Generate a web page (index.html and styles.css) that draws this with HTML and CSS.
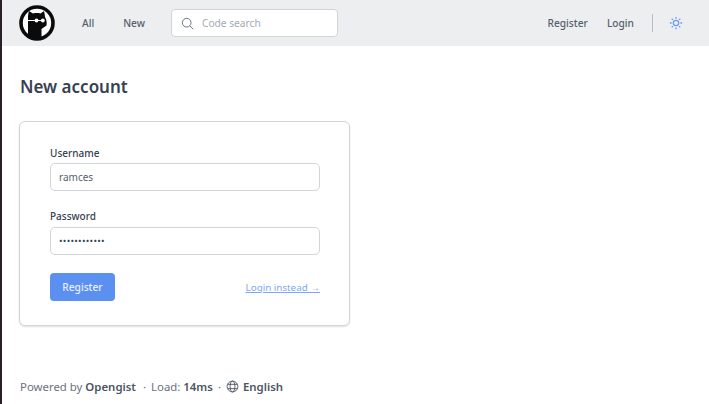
FILE: index.html
```html
<!DOCTYPE html>
<html lang="en">
<head>
<meta charset="utf-8">
<title>New account</title>
<link rel="stylesheet" href="styles.css">
</head>
<body>
<div class="page">
  <header class="nav">
    <svg class="logo" viewBox="0 0 36 36" aria-hidden="true">
      <circle cx="18" cy="18" r="16" fill="#fff" stroke="#0b0b0b" stroke-width="3.6"/>
      <path d="M9 33V13C9 10 9.500 7.500 10 6l4 2.500c2.500-.6 5-.6 7.500 0L25 6c.6 2 .8 4 1 6 1.500 2.500 2 5.500 1.500 8.500L22.500 24v9z" fill="#0b0b0b"/>
      <path d="M4 15.500h20" stroke="#fff" stroke-width="1"/>
      <circle cx="17.500" cy="15.500" r="1.900" fill="#fff"/>
      <circle cx="23.800" cy="15.500" r="1.900" fill="#fff"/>
    </svg>
    <nav class="nav-links">
      <a class="nav-link" href="#">All</a>
      <a class="nav-link" href="#">New</a>
    </nav>
    <div class="search">
      <svg class="search-icon" viewBox="0 0 24 24" aria-hidden="true"><circle cx="10.500" cy="10.500" r="8"/><path d="M16.500 16.500l6 6"/></svg>
      <span class="search-text">Code search</span>
    </div>
    <div class="nav-right">
      <a class="nav-link" href="#">Register</a>
      <a class="nav-link" href="#">Login</a>
      <span class="divider"></span>
      <svg class="sun" viewBox="0 0 24 24" aria-hidden="true"><circle cx="12" cy="12" r="4.600"/><path d="M12 1.500v3M12 19.500v3M1.500 12h3M19.500 12h3M4.600 4.600l2.100 2.100M17.300 17.300l2.100 2.100M4.600 19.400l2.100-2.100M17.300 6.700l2.100-2.100"/></svg>
    </div>
  </header>
  <main class="main">
    <h1 class="title">New account</h1>
    <form class="card">
      <label class="label">Username</label>
      <div class="input">ramces</div>
      <label class="label label-second">Password</label>
      <div class="input input-pass">••••••••••••</div>
      <div class="actions">
        <span class="button">Register</span>
        <a class="login-link" href="#">Login instead →</a>
      </div>
    </form>
  </main>
  <footer class="footer">
    <span>Powered by <b>Opengist</b></span>
    <span class="dot">·</span>
    <span>Load: <b>14ms</b></span>
    <span class="dot dot-last">·</span>
    <svg class="globe" viewBox="0 0 24 24" aria-hidden="true"><circle cx="12" cy="12" r="10"/><ellipse cx="12" cy="12" rx="4.500" ry="10"/><path d="M3 8h18M3 16h18"/></svg>
    <b>English</b>
  </footer>
</div>
</body>
</html>
```

FILE: styles.css
```css
* { box-sizing: border-box; }
html, body { margin: 0; height: 100%; }
body {
  background: #fff;
  font-family: "Noto Sans", "Open Sans", sans-serif;
  color: #374151;
  overflow: hidden;
}
.page {
  height: 404px;
  border-left: 2px solid #2a1f28;
  display: flex;
  flex-direction: column;
}
.nav {
  height: 46px;
  flex: none;
  background: #eceef0;
  display: flex;
  align-items: center;
  padding-left: 17px;
}
.logo { width: 36px; height: 36px; flex: none; margin-top: -1px; }
.nav-links { display: flex; gap: 29px; margin-left: 27px; }
.nav-link {
  font-size: 10.2px;
  font-weight: 500;
  color: #565f6d;
  text-decoration: none;
  white-space: nowrap;
}
.search {
  width: 167px;
  height: 28px;
  margin-left: 26px;
  background: #fff;
  border: 1px solid #d1d5db;
  border-radius: 4px;
  display: flex;
  align-items: center;
  padding-left: 9px;
  gap: 8px;
}
.search-icon { width: 13px; height: 13px; fill: none; stroke: #6b7280; stroke-width: 1.8; }
.search-text { font-size: 10.2px; color: #a3a9b3; }
.nav-right { margin-left: auto; display: flex; align-items: center; padding-right: 26px; }
.nav-right .nav-link + .nav-link { margin-left: 19px; }
.divider { width: 1px; height: 18px; background: #b8bcc3; margin: 0 16px 0 18px; }
.sun { width: 14px; height: 14px; fill: none; stroke: #6e9cf5; stroke-width: 2.2; }
.main { padding: 0 0 0 17px; flex: none; }
.title {
  margin: 29px 0 0 1px;
  font-size: 17px;
  line-height: 24px;
  font-weight: 600;
  color: #374151;
}
.card {
  width: 331px;
  height: 205px;
  margin-top: 22px;
  border: 1px solid #d1d5db;
  border-radius: 6px;
  box-shadow: 0 1px 2px rgba(0,0,0,.12);
  padding: 23px 29px 0 30px;
  background: #fff;
}
.label { display: block; font-size: 10px; line-height: 16px; font-weight: 500; color: #374151; }
.label-second { margin-top: 17px; }
.input {
  height: 28px;
  margin-top: 2px;
  border: 1px solid #d1d5db;
  border-radius: 5px;
  padding-left: 8px;
  font-size: 10px;
  line-height: 26px;
  color: #565f6d;
}
.input-pass { margin-top: 3px; font-size: 9.5px; letter-spacing: .25px; color: #374151; }
.actions { display: flex; justify-content: space-between; align-items: center; margin-top: 18px; }
.button {
  width: 65px;
  height: 28px;
  background: #5b8ff0;
  border-radius: 4px;
  color: #e8f0ff;
  font-size: 10.2px;
  font-weight: 500;
  display: flex;
  align-items: center;
  justify-content: center;
}
.login-link { font-size: 9.8px; color: #7aa7f7; text-decoration: underline; }
.footer {
  margin-top: 53px;
  padding-left: 18px;
  display: flex;
  align-items: center;
  font-size: 11.4px;
  color: #6b7280;
  white-space: nowrap;
}
.footer b { font-weight: 600; color: #4b5563; }
.dot { margin: 0 5px 0 7px; }
.dot-last { margin: 0 5px 0 5px; }
.globe { width: 13px; height: 13px; fill: none; stroke: #4b5563; stroke-width: 1.7; margin: 0 4px 0 0; }
```
